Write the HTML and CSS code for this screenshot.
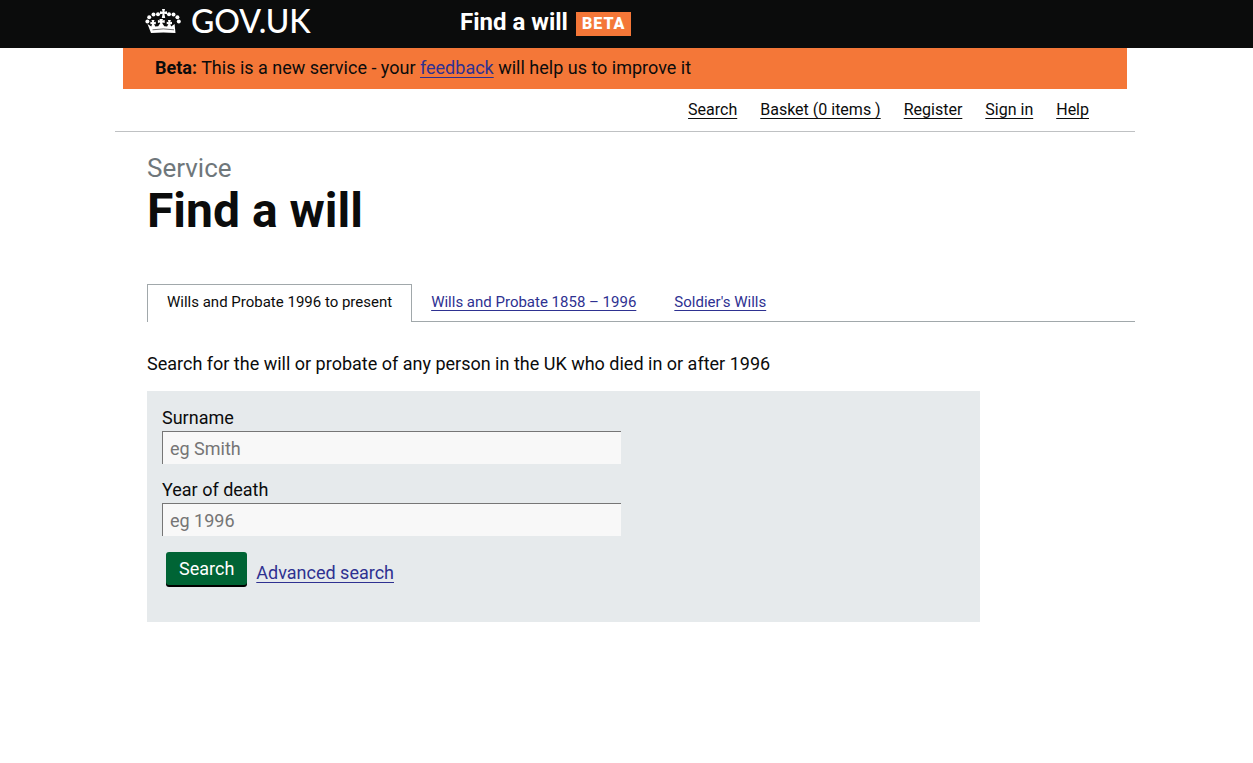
FILE: index.html
```html
<!DOCTYPE html>
<html lang="en">
<head>
    <meta charset="UTF-8">
    <meta name="viewport" content="width=device-width, initial-scale=1.0">
    <title>Find a will - GOV.UK</title>
    <link rel="stylesheet" href="styles.css">
</head>
<body>

<header class="header">
    <div class="header-inner">
        <a class="logo" href="#">
            <svg class="crown" viewBox="0 0 36 27" width="36" height="27" fill="#fff" aria-hidden="true">
                <!-- top cross -->
                <path d="M17 1h3l-.6 2.700L22 3.200v3l-2.600-.5.8 4.300h-3.400l.8-4.300L15 6.200v-3l2.600.5z"/>
                <!-- jewels on the arches -->
                <circle cx="13" cy="6.200" r="2"/>
                <circle cx="8.500" cy="6.600" r="2"/>
                <circle cx="4.200" cy="9.200" r="2"/>
                <circle cx="2.400" cy="13.600" r="2"/>
                <circle cx="24" cy="6.200" r="2"/>
                <circle cx="28.500" cy="6.600" r="2"/>
                <circle cx="32.400" cy="9.200" r="2"/>
                <circle cx="33.800" cy="13.600" r="2"/>
                <!-- base with the inner crosses -->
                <path d="M2.500 16l3.800 2.500.7-2.600-1.600.4v-2.500l1.700.4-.6-2.200h3l-.6 2.200 1.900-.4v2.500l-1.700-.3 1.200 2.600 2.900-.3 2-3-.3-.8-2 .6v-3l2.200.5-.8-1.600h3.800l-.8 1.600 2.400-.5v3l-2.100-.6-.3.800 2 3 2.800.3 1.300-2.600-1.700.3v-2.500l1.800.4-.6-2.200h3l-.6 2.200 1.700-.4v2.500l-1.600-.4.700 2.600 3.500-2.500L30.500 25q-12-.8-24.500 0z"/>
                <path d="M7.500 21.800q10.800-1.800 21.500 0" fill="none" stroke="#0b0c0c" stroke-width=".6"/>
            </svg>
            <span class="logo-text">GOV.UK</span>
        </a>
        <div class="service-name">
            <span>Find a will</span>
            <strong class="beta-tag">BETA</strong>
        </div>
    </div>
</header>

<div class="page">
    <div class="beta-banner">
        <strong>Beta:</strong> This is a new service - your <a href="#">feedback</a> will help us to improve it
    </div>

    <nav class="user-nav">
        <a href="#">Search</a>
        <a href="#">Basket (0 items )</a>
        <a href="#">Register</a>
        <a href="#">Sign in</a>
        <a href="#">Help</a>
    </nav>

    <main class="content">
        <div class="title">
            <p class="title-caption">Service</p>
            <h1>Find a will</h1>
        </div>

        <nav class="tabs">
            <a class="tab active" href="#" aria-current="page">Wills and Probate 1996 to present</a>
            <a class="tab" href="#">Wills and Probate 1858 – 1996</a>
            <a class="tab" href="#">Soldier's Wills</a>
        </nav>

        <p class="intro">Search for the will or probate of any person in the UK who died in or after 1996</p>

        <form class="search-form">
            <div class="field">
                <label for="surname">Surname</label>
                <input type="text" id="surname" name="surname" placeholder="eg Smith">
            </div>
            <div class="field">
                <label for="year">Year of death</label>
                <input type="text" id="year" name="year" placeholder="eg 1996">
            </div>
            <div class="actions">
                <button type="submit">Search</button>
                <a href="#">Advanced search</a>
            </div>
        </form>
    </main>
</div>

</body>
</html>
```
FILE: styles.css
```css
* {
    box-sizing: border-box;
}
body {
    margin: 0;
    background-color: #fff;
    color: #0b0c0c;
    font-family: Roboto, Arial, sans-serif;
    font-size: 18px;
    line-height: 24px;
}
a {
    color: #2e3191;
    text-decoration: underline;
    text-decoration-thickness: 1px;
    text-decoration-skip-ink: none;
    text-underline-offset: 3px;
}
.header {
    background-color: #0b0c0c;
    color: #fff;
    padding-right: 3px;
}
.header-inner {
    display: grid;
    grid-template-columns: 315px 1fr;
    align-items: center;
    max-width: 960px;
    height: 48px;
    margin: 0 auto;
    padding-bottom: 4px;
}
.logo {
    display: flex;
    align-items: center;
    gap: 10px;
    padding-bottom: 2px;
    color: #fff;
    text-decoration: none;
}
.logo-text {
    font-family: Lato, sans-serif;
    font-size: 32px;
    font-weight: 500;
    line-height: 36px;
}
.service-name {
    display: flex;
    align-items: center;
    gap: 8px;
    font-size: 24px;
    font-weight: bold;
}
.beta-tag {
    margin-top: 4px;
    padding: 0 6px;
    background-color: #f47738;
    font-size: 16px;
    letter-spacing: 1px;
}
.page {
    max-width: 1023px;
    margin: 0 auto;
    padding-right: 3px;
}
.beta-banner {
    margin: 0 8px;
    padding: 8px 32px 9px;
    background-color: #f47738;
}
.user-nav {
    display: flex;
    justify-content: flex-end;
    gap: 23px;
    padding: 9px 46px;
    border-bottom: 1px solid #bfc1c3;
    font-size: 16px;
}
.user-nav a {
    color: #0b0c0c;
}
.content {
    padding-left: 32px;
}
.title {
    padding: 20px 0 46px;
}
.title-caption {
    margin: 0;
    color: #6f777b;
    font-size: 26px;
    line-height: 32px;
}
h1 {
    margin: 0;
    font-size: 48px;
    line-height: 54px;
}
.tabs {
    display: flex;
    border-bottom: 1px solid #a1a8ab;
    font-size: 15px;
}
.tab {
    padding: 5px 19px 7px;
    margin-top: 1px;
}
.tab.active {
    margin: 0 0 -1px;
    padding-bottom: 8px;
    border: 1px solid #a1a8ab;
    border-bottom: 0;
    background-color: #fff;
    color: #0b0c0c;
    text-decoration: none;
}
.intro {
    margin: 30px 0 15px;
}
.search-form {
    max-width: 833px;
    padding: 15px 15px 35px;
    background-color: #e6eaec;
}
.field {
    display: flex;
    flex-direction: column;
    gap: 1px;
    max-width: 459px;
    margin-bottom: 14px;
}
input {
    height: 33px;
    padding: 2px 7px;
    border: 1px solid #767676;
    border-right: 0;
    border-bottom: 0;
    background-color: #f8f8f8;
    color: #0b0c0c;
    font: inherit;
}
input::placeholder {
    color: #757575;
}
.actions {
    display: flex;
    align-items: flex-end;
    gap: 9px;
    padding: 2px 4px;
}
button {
    padding: 5px 13px 4px;
    border: 0;
    border-radius: 3px;
    background-color: #006435;
    box-shadow: 0 2px 0 #000;
    color: #fff;
    font: inherit;
}
```
